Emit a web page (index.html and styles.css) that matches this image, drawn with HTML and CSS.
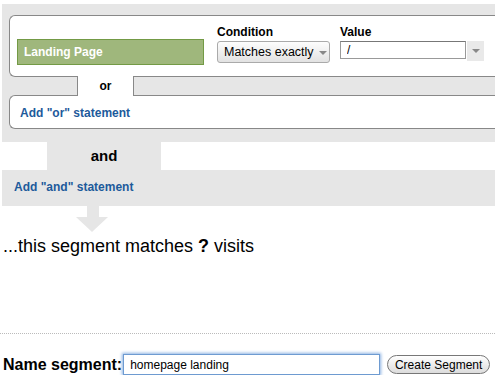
FILE: index.html
```html
<!DOCTYPE html>
<html lang="en">
<head>
  <meta charset="UTF-8" />
  <title>Segment Builder</title>
  <link rel="stylesheet" href="styles.css">
</head>
<body>
  <div class="builder">
    <div class="rule-box">
      <div class="dimension">Landing Page</div>
      <div class="field field-condition">
        <label>Condition</label>
        <div class="select">Matches exactly <span class="caret"></span></div>
      </div>
      <div class="field field-value">
        <label>Value</label>
        <div class="combo">
          <input class="value-input" type="text" value="/">
          <span class="combo-btn"><span class="caret"></span></span>
        </div>
      </div>
    </div>
    <div class="or-tab">or</div>
    <div class="add-box"><a href="#">Add "or" statement</a></div>
  </div>

  <div class="and-tab">and</div>
  <div class="and-bar"><a href="#">Add "and" statement</a></div>

  <svg class="arrow" width="36" height="26" viewBox="0 0 36 26">
    <rect x="13" y="0" width="12" height="11" fill="#e6e6e6"/>
    <polygon points="2,11 34,11 18,26" fill="#e6e6e6"/>
  </svg>

  <p class="summary">...this segment matches <b>?</b> visits</p>

  <div class="name-row">
    <label for="segment-name">Name segment:</label>
    <input id="segment-name" class="name-input" type="text" value="homepage landing">
    <button class="create-btn">Create Segment</button>
  </div>
</body>
</html>
```

FILE: styles.css
```css
body {
  margin: 0;
  font-family: "Liberation Sans", Arial, sans-serif;
  color: #000;
  background-color: #fff;
  width: 495px;
}
a {
  color: #1d5a9b;
  font-weight: bold;
  font-size: 12px;
  text-decoration: none;
}
.builder {
  margin: 4px 0 0 2px;
  padding: 11px 0 13px 7px;
  background-color: #e6e6e6;
}
.rule-box {
  display: flex;
  align-items: flex-start;
  box-sizing: border-box;
  height: 62px;
  padding-left: 7px;
  background-color: #fff;
  border: 1px solid #888;
  border-right: none;
  border-radius: 6px 0 0 6px;
}
.dimension {
  box-sizing: border-box;
  width: 187px;
  height: 26px;
  margin-top: 23px;
  padding-left: 6px;
  line-height: 24px;
  font-size: 12px;
  font-weight: bold;
  color: #fff;
  background-color: #9fb77c;
  border: 1px solid #739a45;
}
.field {
  margin-top: 9px;
}
.field label {
  display: block;
  font-size: 12px;
  font-weight: bold;
  line-height: 14px;
  margin-bottom: 2px;
}
.field-condition {
  margin-left: 13px;
}
.field-value {
  margin-left: 10px;
}
.select {
  box-sizing: border-box;
  width: 113px;
  height: 22px;
  padding-left: 6px;
  line-height: 20px;
  font-size: 12.5px;
  white-space: nowrap;
  border: 1px solid #aaa;
  border-radius: 3px;
  background: linear-gradient(#fdfdfd, #e2e2e2);
}
.caret {
  display: inline-block;
  width: 0;
  height: 0;
  margin-left: 2px;
  vertical-align: middle;
  border-left: 4px solid transparent;
  border-right: 4px solid transparent;
  border-top: 4px solid #888;
}
.combo {
  display: flex;
  align-items: flex-start;
}
.value-input {
  box-sizing: border-box;
  width: 126px;
  height: 18px;
  margin: 0;
  padding: 0 6px;
  font-family: "Liberation Sans", Arial, sans-serif;
  font-size: 12px;
  border: 1px solid #999;
  border-top-color: #777;
  outline: none;
}
.combo-btn {
  display: flex;
  align-items: center;
  justify-content: center;
  width: 17px;
  height: 20px;
  margin-left: 1px;
  background-color: #e9e9e9;
}
.combo-btn .caret {
  margin: 0;
}
.or-tab {
  position: relative;
  box-sizing: border-box;
  width: 57px;
  height: 20px;
  margin: -1px 0 -1px 68px;
  line-height: 20px;
  text-align: center;
  font-size: 12px;
  font-weight: bold;
  background-color: #fff;
  border-left: 1px solid #888;
  border-right: 1px solid #888;
}
.add-box {
  box-sizing: border-box;
  height: 34px;
  padding-left: 10px;
  line-height: 32px;
  background-color: #fff;
  border: 1px solid #888;
  border-right: none;
  border-radius: 6px 0 0 6px;
}
.and-tab {
  width: 114px;
  height: 28px;
  margin-left: 47px;
  line-height: 28px;
  text-align: center;
  font-size: 15px;
  font-weight: bold;
  background-color: #e6e6e6;
}
.and-bar {
  height: 32px;
  margin-left: 2px;
  padding: 0 0 4px 12px;
  line-height: 32px;
  background-color: #e6e6e6;
}
.arrow {
  display: block;
  margin-left: 74px;
}
.summary {
  margin: 3px 0 76px;
  padding-left: 3px;
  font-size: 18px;
  line-height: 22px;
}
.name-row {
  display: flex;
  align-items: center;
  height: 21px;
  padding-top: 20px;
  border-top: 1px dotted #bbb;
}
.name-row label {
  padding-left: 3px;
  margin-right: 1px;
  font-size: 16px;
  font-weight: bold;
}
.name-input {
  box-sizing: border-box;
  width: 257px;
  height: 21px;
  margin: 0;
  padding: 0 6px;
  font-family: "Liberation Sans", Arial, sans-serif;
  font-size: 12px;
  border: 1px solid #6e9bd1;
  box-shadow: 0 0 3px 1px #8db3e2;
  outline: none;
}
.create-btn {
  box-sizing: border-box;
  width: 103px;
  height: 19px;
  margin-left: 7px;
  padding: 0;
  font-family: "Liberation Sans", Arial, sans-serif;
  font-size: 12px;
  color: #000;
  border: 1px solid #777;
  border-radius: 10px;
  background: linear-gradient(#ffffff, #dcdcdc);
}
```
